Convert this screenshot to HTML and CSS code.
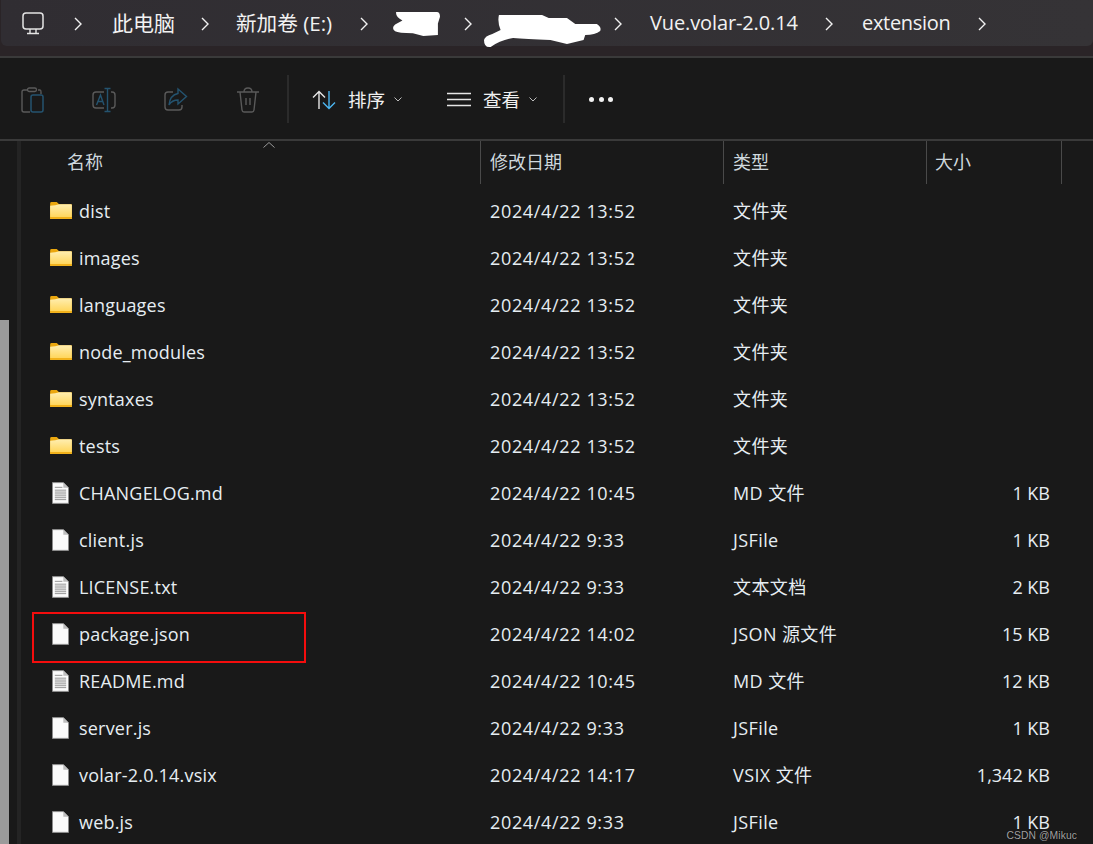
FILE: index.html
```html
<!DOCTYPE html>
<html lang="zh">
<head>
<meta charset="utf-8">
<title>extension</title>
<link rel="stylesheet" href="styles.css">
</head>
<body>
<svg class="defs" width="0" height="0" aria-hidden="true">
  <defs>
    <linearGradient id="fg" x1="0" y1="0" x2="0" y2="1">
      <stop offset="0" stop-color="#ffeeb0"/><stop offset="1" stop-color="#ffd65c"/>
    </linearGradient>
    <symbol id="folder" viewBox="0 0 23 18">
      <path d="M0 1.5Q0 0 1.5 0H7L9.5 2.5H23V18H0Z" fill="#eba70e"/>
      <path d="M0 4Q6 4 9.5 2.5H22Q23 2.5 23 3.5V16H0Z" fill="url(#fg)"/>
      <rect y="16" width="23" height="2" fill="#f2b21c"/>
    </symbol>
    <symbol id="doc" viewBox="0 0 18 23">
      <path d="M.5.5H12L17.5 6V22.5H.5Z" fill="#fbfbfb" stroke="#8c8c8c"/>
      <path d="M12 .5V6H17.5Z" fill="#bdbdbd"/>
    </symbol>
    <symbol id="doclines" viewBox="0 0 18 23">
      <path d="M.5.5H12L17.5 6V22.5H.5Z" fill="#fbfbfb" stroke="#8c8c8c"/>
      <path d="M12 .5V6H17.5Z" fill="#bdbdbd"/>
      <path d="M3 5.5H11M3 8.5H15M3 10.5H15M3 12.5H15M3 14.5H15M3 16.5H15M3 18.5H15" stroke="#8e8e8e" fill="none"/>
    </symbol>
    <symbol id="chev" viewBox="0 0 8 14">
      <path d="M1 1L7 7L1 13" fill="none" stroke="#f2f2f2" stroke-width="1.4"/>
    </symbol>
    <symbol id="caret" viewBox="0 0 8 5">
      <path d="M.5.5L4 4L7.5.5" fill="none" stroke="#bdbdbd" stroke-width="1"/>
    </symbol>
  </defs>
</svg>

<div class="sidebar"></div>

<main class="window">
  <nav class="crumbs-wrap">
    <div class="crumbs">
      <svg class="pc" viewBox="0 0 22 23" width="22" height="23"><rect x="1" y="1" width="20" height="16" rx="3" fill="none" stroke="#e4e4e4" stroke-width="1.5"/><path d="M8 17V21M14 17V21M5 21.5H17" fill="none" stroke="#e4e4e4" stroke-width="1.4"/></svg>
      <svg class="chev"><use href="#chev"/></svg>
      <span class="crumb w-a">此电脑</span>
      <svg class="chev"><use href="#chev"/></svg>
      <span class="crumb w-b">新加卷 (E:)</span>
      <svg class="chev"><use href="#chev"/></svg>
      <svg class="blot b1" viewBox="0 0 46 28" width="48" height="27" preserveAspectRatio="none"><path d="M4 2H43Q46 2 46 7L44 14L44 26L30 27L20 24Q6 24 3 22Q-1 19 3 15L10 11Q3 7 4 2Z" fill="#fff"/></svg>
      <svg class="chev"><use href="#chev"/></svg>
      <svg class="blot b2" viewBox="0 0 141 34" width="117" height="34" preserveAspectRatio="none"><path d="M18 1H70L78 4H100L110 10H136Q142 13 140 17Q134 21 122 21L120 26L100 30L80 26Q50 25 35 24Q20 26 8 33Q0 34 0 26Q1 22 10 20L20 16Q16 8 18 1Z" fill="#fff"/></svg>
      <svg class="chev"><use href="#chev"/></svg>
      <span class="crumb w-c">Vue.volar-2.0.14</span>
      <svg class="chev"><use href="#chev"/></svg>
      <span class="crumb w-d">extension</span>
      <svg class="chev"><use href="#chev"/></svg>
    </div>
  </nav>

  <section class="toolbar">
    <svg class="tool t1" viewBox="0 0 24 26" width="24" height="26"><path d="M7 3H3Q1 3 1 5V23Q1 25 3 25H9M17 3H19Q20 3 20 5V7" fill="none" stroke="#5a5a5a" stroke-width="1.4"/><rect x="6.500" y="1" width="9" height="3.500" rx="1.700" fill="none" stroke="#5a5a5a" stroke-width="1.300"/><rect x="10" y="8" width="12" height="17" rx="2" fill="none" stroke="#24536f" stroke-width="1.500"/></svg>
    <svg class="tool t2" viewBox="0 0 24 26" width="24" height="26"><path d="M12 5H4Q1 5 1 8V18Q1 21 4 21H12M19 5H20Q23 5 23 8V18Q23 21 20 21H19" fill="none" stroke="#5a5a5a" stroke-width="1.4"/><path d="M4.500 18L8.500 8L12 18M6 14.500H11M15.500 2V24M12.500 1.500H18.500M12.500 24.500H18.500" fill="none" stroke="#24536f" stroke-width="1.400"/></svg>
    <svg class="tool t3" viewBox="0 0 24 26" width="24" height="26"><path d="M9 5H4Q1 5 1 8V20Q1 23 4 23H15Q18 23 18 20V18" fill="none" stroke="#5a5a5a" stroke-width="1.4"/><path d="M14 2L22.500 9.500L14 17V13Q8 13 5 18Q6 8 14 6.500Z" fill="none" stroke="#24536f" stroke-width="1.400"/></svg>
    <svg class="tool t4" viewBox="0 0 24 26" width="24" height="26"><path d="M1 5H23M4 5L6 23Q6.300 25 8 25H16Q17.700 25 18 23L20 5M8 5Q8 1 12 1Q16 1 16 5M10 11V18M14 11V18" fill="none" stroke="#5a5a5a" stroke-width="1.400"/></svg>
    <i class="vsep"></i>
    <svg class="sort-ico" viewBox="0 0 24 20" width="24" height="20"><path d="M7 19V1.500M1 7.500L7 1.500L13 7.500" fill="none" stroke="#e6e6e6" stroke-width="1.400"/><path d="M17 1V18.500M11 12.500L17 18.500L23 12.500" fill="none" stroke="#4cb5ef" stroke-width="1.400"/></svg>
    <span class="tool-label l1">排序</span>
    <svg class="caret"><use href="#caret"/></svg>
    <svg class="view-ico" viewBox="0 0 24 15" width="24" height="15"><path d="M0 1.500H24M0 7.500H24M0 13.500H24" stroke="#e6e6e6" stroke-width="1.300" fill="none"/></svg>
    <span class="tool-label l2">查看</span>
    <svg class="caret"><use href="#caret"/></svg>
    <i class="vsep s2"></i>
    <span class="dots"><i></i><i></i><i></i></span>
  </section>

  <section class="table">
    <header class="head">
      <div class="hc h-name">名称<svg class="sort-up" viewBox="0 0 12 6" width="12" height="6"><path d="M.5 5.500L6 .5L11.500 5.500" fill="none" stroke="#9a9a9a"/></svg></div>
      <div class="hc h-date">修改日期</div>
      <div class="hc h-type">类型</div>
      <div class="hc h-size">大小</div>
    </header>

    <div class="row"><div class="name"><svg class="ico-f"><use href="#folder"/></svg>dist</div><div class="date">2024/4/22 13:52</div><div class="type">文件夹</div><div class="size"></div></div>
    <div class="row"><div class="name"><svg class="ico-f"><use href="#folder"/></svg>images</div><div class="date">2024/4/22 13:52</div><div class="type">文件夹</div><div class="size"></div></div>
    <div class="row"><div class="name"><svg class="ico-f"><use href="#folder"/></svg>languages</div><div class="date">2024/4/22 13:52</div><div class="type">文件夹</div><div class="size"></div></div>
    <div class="row"><div class="name"><svg class="ico-f"><use href="#folder"/></svg>node_modules</div><div class="date">2024/4/22 13:52</div><div class="type">文件夹</div><div class="size"></div></div>
    <div class="row"><div class="name"><svg class="ico-f"><use href="#folder"/></svg>syntaxes</div><div class="date">2024/4/22 13:52</div><div class="type">文件夹</div><div class="size"></div></div>
    <div class="row"><div class="name"><svg class="ico-f"><use href="#folder"/></svg>tests</div><div class="date">2024/4/22 13:52</div><div class="type">文件夹</div><div class="size"></div></div>
    <div class="row"><div class="name"><svg class="ico-d"><use href="#doclines"/></svg>CHANGELOG.md</div><div class="date">2024/4/22 10:45</div><div class="type">MD 文件</div><div class="size">1 KB</div></div>
    <div class="row"><div class="name"><svg class="ico-d"><use href="#doc"/></svg>client.js</div><div class="date">2024/4/22 9:33</div><div class="type">JSFile</div><div class="size">1 KB</div></div>
    <div class="row"><div class="name"><svg class="ico-d"><use href="#doclines"/></svg>LICENSE.txt</div><div class="date">2024/4/22 9:33</div><div class="type">文本文档</div><div class="size">2 KB</div></div>
    <div class="row"><div class="name"><svg class="ico-d"><use href="#doc"/></svg>package.json<span class="highlight"></span></div><div class="date">2024/4/22 14:02</div><div class="type">JSON 源文件</div><div class="size">15 KB</div></div>
    <div class="row"><div class="name"><svg class="ico-d"><use href="#doclines"/></svg>README.md</div><div class="date">2024/4/22 10:45</div><div class="type">MD 文件</div><div class="size">12 KB</div></div>
    <div class="row"><div class="name"><svg class="ico-d"><use href="#doc"/></svg>server.js</div><div class="date">2024/4/22 9:33</div><div class="type">JSFile</div><div class="size">1 KB</div></div>
    <div class="row"><div class="name"><svg class="ico-d"><use href="#doc"/></svg>volar-2.0.14.vsix</div><div class="date">2024/4/22 14:17</div><div class="type">VSIX 文件</div><div class="size">1,342 KB</div></div>
    <div class="row"><div class="name"><svg class="ico-d"><use href="#doc"/></svg>web.js</div><div class="date">2024/4/22 9:33</div><div class="type">JSFile</div><div class="size">1 KB</div></div>
  </section>
</main>

<div class="watermark">CSDN @Mikuc</div>
</body>
</html>
```

FILE: styles.css
```css
* { box-sizing: border-box; }
html, body { margin: 0; height: 100%; overflow: hidden; }
body {
  background: #191919;
  color: #e8eef2;
  font-family: "Open Sans", "Noto Sans CJK SC", sans-serif;
  font-size: 18px;
  position: relative;
}
.defs { position: absolute; }

.sidebar {
  position: absolute;
  left: 0;
  top: 320px;
  bottom: 0;
  width: 9px;
  background: #9b9b9b;
}

.window { display: flex; flex-direction: column; height: 844px; }

.crumbs-wrap {
  height: 58px;
  flex: none;
  background: #2a2427;
  border-bottom: 2px solid #3a3a3a;
}
.crumbs {
  height: 46px;
  margin-left: 1px;
  padding-left: 21px;
  background: linear-gradient(90deg, #302d32, #353336);
  border-radius: 0 0 6px 6px;
  display: flex;
  align-items: center;
  color: #f2f2f2;
  font-size: 20px;
  white-space: nowrap;
}
.pc { flex: none; margin-right: 30px; margin-top: 1px; }
.chev { width: 8px; height: 14px; flex: none; margin-top: 1px; }
.crumb { flex: none; position: relative; top: -1px; }
.w-a { width: 63px; margin: 0 26px 0 30px; font-size: 21px; }
.w-b { width: 97px; margin: 0 27px 0 27px; font-size: 20.6px; }
.w-c { width: 148px; margin: 0 27px 0 28px; letter-spacing: -.12px; }
.w-d { width: 88px; margin: 0 28px 0 29px; letter-spacing: -.3px; }
.blot { flex: none; }
.b1 { margin: 0 24px 0 24px; }
.b2 { margin: 16px 13px 0 12px; }

.toolbar {
  height: 83px;
  flex: none;
  display: flex;
  align-items: center;
  border-bottom: 2px solid #3a3a3a;
  padding-top: 2px;
}
.tool { flex: none; }
.t1 { margin-left: 21px; }
.t2 { margin-left: 47px; }
.t3 { margin-left: 48px; }
.t4 { margin-left: 48px; }
.vsep {
  width: 2px;
  height: 48px;
  background: #2b2b2b;
  margin: -2px 0 0 27px;
  flex: none;
}
.sort-ico { margin-left: 23px; flex: none; }
.tool-label { width: 37px; font-size: 18.500px; color: #f0f0f0; margin-left: 12px; line-height: 24px; white-space: nowrap; }
.caret { width: 8px; height: 5px; margin-left: 9px; flex: none; }
.view-ico { margin-left: 45px; flex: none; }
.s2 { margin-left: 26px; }
.dots { display: flex; gap: 4.500px; margin-left: 24px; }
.dots i { width: 5px; height: 5px; border-radius: 50%; background: #f2f2f2; }

.table {
  flex: 1;
  margin-left: 17px;
  border-left: 4px solid #242424;
  overflow: hidden;
  position: relative;
}
.head, .row {
  display: grid;
  grid-template-columns: 460px 243px 203px 135px;
}
.head { height: 40px; color: #cfd8de; font-size: 18px; }
.hc {
  border-right: 1px solid #4a4a4a;
  padding-left: 46px;
  line-height: 43px;
  position: relative;
  white-space: nowrap;
}
.h-date, .h-type { padding-left: 9px; }
.h-size { padding-left: 8px; }
.sort-up { position: absolute; left: 242px; top: 1px; }

.row { height: 47px; align-items: center; font-size: 18px; line-height: 24px; color: #e6edf2; }
.head + .row { margin-top: 6px; }
.name { display: flex; align-items: center; padding-left: 29px; position: relative; white-space: nowrap; letter-spacing: .2px; }
.date { padding-left: 9px; letter-spacing: .65px; }
.type { padding-left: 9px; letter-spacing: .4px; }
.size { text-align: right; padding-right: 12px; }
.ico-f { width: 22px; height: 17px; margin-right: 7px; flex: none; }
.ico-d { width: 17px; height: 22px; margin: 0 10px 0 2px; flex: none; }

.highlight {
  position: absolute;
  left: 11px;
  top: -10px;
  width: 274px;
  height: 51px;
  border: 2px solid #f40d0d;
}

.watermark {
  position: absolute;
  right: 16px;
  bottom: 3px;
  font-family: "Liberation Sans", sans-serif;
  font-size: 10.300px;
  letter-spacing: .1px;
  color: rgba(215, 215, 215, .75);
  text-shadow: 0 0 1px #000;
}
```
